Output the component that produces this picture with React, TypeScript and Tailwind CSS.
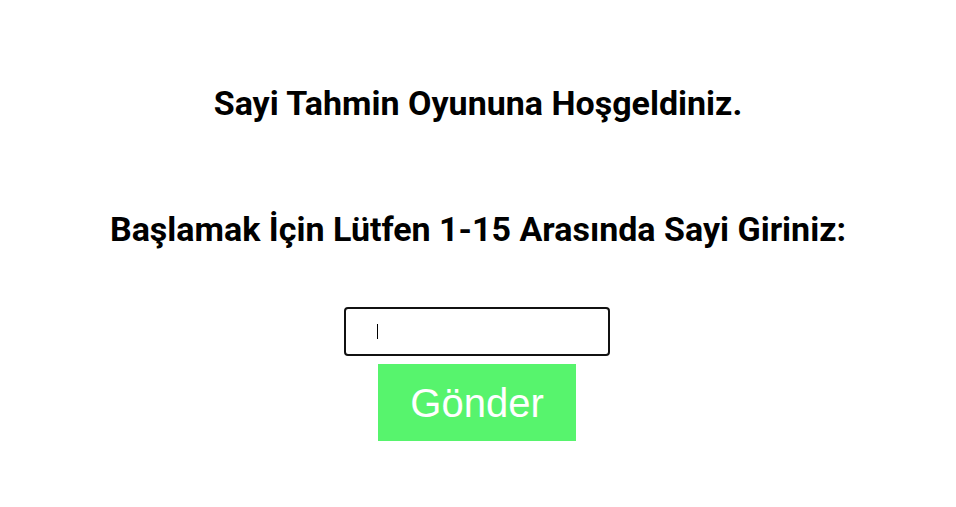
import React from "react";

export default function App() {
  return (
    <div className="w-[956px] h-[507px] bg-white flex flex-col items-center pt-[83px]">
      <h1 className="h-[40px] leading-[40px] text-[34px] font-bold text-black whitespace-nowrap [font-family:Roboto,'Liberation_Sans',sans-serif]">
        Sayi Tahmin Oyununa Hoşgeldiniz.
      </h1>
      <h2 className="mt-[86px] h-[40px] leading-[40px] text-[34px] font-bold text-black whitespace-nowrap [font-family:Roboto,'Liberation_Sans',sans-serif]">
        Başlamak İçin Lütfen 1-15 Arasında Sayi Giriniz:
      </h2>
      <div className="mt-[58px] mr-[2px] w-[266px] h-[49px] border-2 border-[#111] rounded-[4px] bg-white flex items-center pl-[31px]">
        <div className="w-px h-[15px] bg-black" />
      </div>
      <button className="mt-[8px] mr-[2px] w-[198px] h-[77px] bg-[#57f46d] text-white text-[40px] leading-none [font-family:'Liberation_Sans',Arial,sans-serif]">
        Gönder
      </button>
    </div>
  );
}
